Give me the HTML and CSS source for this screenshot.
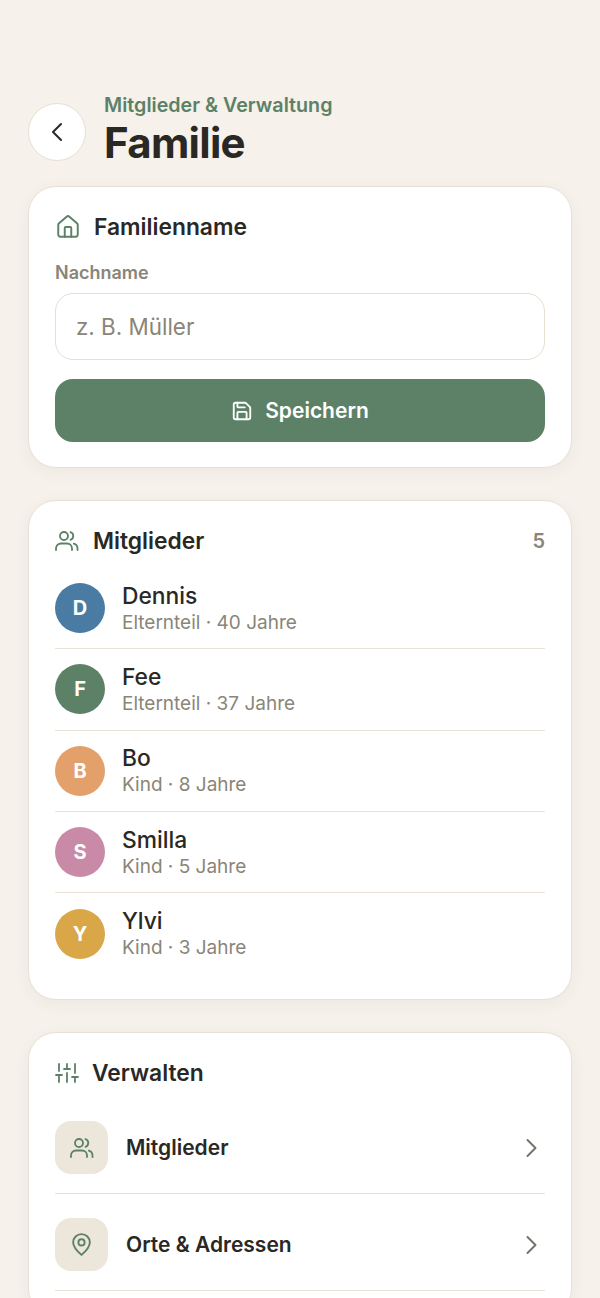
FILE: index.html
```html
<!DOCTYPE html>
<html lang="de">
<head>
    <meta charset="UTF-8">
    <meta name="viewport" content="width=device-width, initial-scale=1.0">
    <title>Familie</title>
    <link rel="stylesheet" href="styles.css">
</head>
<body>
    <!-- Header -->
    <header class="page-header">
        <button class="back-btn" aria-label="Zurück">
            <svg width="24" height="24" viewBox="0 0 24 24" class="icon"><path d="M16 4l-8 8 8 8"/></svg>
        </button>
        <div class="header-text">
            <div class="header-sub">Mitglieder &amp; Verwaltung</div>
            <h1>Familie</h1>
        </div>
    </header>

    <!-- Familienname -->
    <section class="card card-name">
        <div class="card-title title-name">
            <svg width="26" height="26" viewBox="0 0 24 24" class="icon icon-green"><path d="M15 21v-8a1 1 0 0 0-1-1h-4a1 1 0 0 0-1 1v8"/><path d="M3 10a2 2 0 0 1 .709-1.528l7-5.999a2 2 0 0 1 2.582 0l7 5.999A2 2 0 0 1 21 10v9a2 2 0 0 1-2 2H5a2 2 0 0 1-2-2z"/></svg>
            <h2>Familienname</h2>
        </div>
        <label class="field-label" for="lastname">Nachname</label>
        <input class="field-input" id="lastname" type="text" placeholder="z. B. Müller">
        <button class="save-btn">
            <svg width="22" height="22" viewBox="0 0 24 24" class="icon"><path d="M15.2 3a2 2 0 0 1 1.400.6l3.800 3.800a2 2 0 0 1 .6 1.400V19a2 2 0 0 1-2 2H5a2 2 0 0 1-2-2V5a2 2 0 0 1 2-2z"/><path d="M17 21v-7a1 1 0 0 0-1-1H8a1 1 0 0 0-1 1v7"/><path d="M7 3v4a1 1 0 0 0 1 1h7"/></svg>
            Speichern
        </button>
    </section>

    <!-- Mitglieder -->
    <section class="card card-members">
        <div class="card-title title-members">
            <svg width="24" height="24" viewBox="0 0 24 24" class="icon icon-green"><circle cx="9" cy="7" r="4"/><path d="M1 21v-1.500a5 5 0 0 1 5-5h6a5 5 0 0 1 5 5V21"/><path d="M15.500 3.200a4 4 0 0 1 0 7.600"/><path d="M22.500 21v-1.500a5 5 0 0 0-3.700-4.800"/></svg>
            <h2>Mitglieder</h2>
            <span class="count">5</span>
        </div>
        <ul class="member-list">
            <li class="member">
                <div class="avatar avatar-blue">D</div>
                <div><div class="member-name">Dennis</div><div class="member-info">Elternteil · 40 Jahre</div></div>
            </li>
            <li class="member">
                <div class="avatar avatar-green">F</div>
                <div><div class="member-name">Fee</div><div class="member-info">Elternteil · 37 Jahre</div></div>
            </li>
            <li class="member">
                <div class="avatar avatar-orange">B</div>
                <div><div class="member-name">Bo</div><div class="member-info">Kind · 8 Jahre</div></div>
            </li>
            <li class="member">
                <div class="avatar avatar-pink">S</div>
                <div><div class="member-name">Smilla</div><div class="member-info">Kind · 5 Jahre</div></div>
            </li>
            <li class="member">
                <div class="avatar avatar-yellow">Y</div>
                <div><div class="member-name">Ylvi</div><div class="member-info">Kind · 3 Jahre</div></div>
            </li>
        </ul>
    </section>

    <!-- Verwalten -->
    <section class="card card-manage">
        <div class="card-title title-manage">
            <svg width="24" height="24" viewBox="0 0 24 24" class="icon icon-green"><path d="M4 21v-7M4 10V3M12 21v-9M12 8V3M20 21v-5M20 12V3M1 14h6M9 8h6M17 16h6"/></svg>
            <h2>Verwalten</h2>
        </div>
        <a class="manage-row">
            <span class="manage-icon">
                <svg width="24" height="24" viewBox="0 0 24 24" class="icon icon-green"><circle cx="9" cy="7" r="4"/><path d="M1 21v-1.500a5 5 0 0 1 5-5h6a5 5 0 0 1 5 5V21"/><path d="M15.500 3.200a4 4 0 0 1 0 7.600"/><path d="M22.500 21v-1.500a5 5 0 0 0-3.700-4.800"/></svg>
            </span>
            <span class="manage-label">Mitglieder</span>
            <svg width="24" height="24" viewBox="0 0 24 24" class="icon icon-grey"><path d="M8.500 4l8 8-8 8"/></svg>
        </a>
        <a class="manage-row">
            <span class="manage-icon">
                <svg width="25" height="25" viewBox="0 0 24 24" class="icon icon-green"><path d="M20 10c0 5-8 12-8 12s-8-7-8-12a8 8 0 0 1 16 0z"/><circle cx="12" cy="10" r="3"/></svg>
            </span>
            <span class="manage-label">Orte &amp; Adressen</span>
            <svg width="24" height="24" viewBox="0 0 24 24" class="icon icon-grey"><path d="M8.500 4l8 8-8 8"/></svg>
        </a>
    </section>
</body>
</html>
```
FILE: styles.css
```css
* {
    margin: 0;
    padding: 0;
    box-sizing: border-box;
}

html, body {
    height: 100%;
    overflow: hidden;
}

body {
    font-family: Inter, "Liberation Sans", sans-serif;
    background: #f6f1eb;
    color: #2a2825;
    padding: 94px 28px 0;
}

.icon {
    fill: none;
    stroke: currentColor;
    stroke-width: 2;
    stroke-linecap: round;
    stroke-linejoin: round;
    flex-shrink: 0;
}

.icon-green {
    color: #5c8166;
    stroke-width: 1.8;
}

.icon-grey {
    color: #77736c;
}

.page-header {
    display: flex;
    align-items: center;
    gap: 18px;
    margin-bottom: 17px;
}

.back-btn {
    width: 58px;
    height: 58px;
    border-radius: 50%;
    background: #fff;
    border: 1px solid #e7dfd3;
    color: #2a2825;
    display: flex;
    align-items: center;
    justify-content: center;
}

.header-sub {
    font-size: 19.700px;
    line-height: 22px;
    font-weight: 600;
    color: #5c8166;
}

h1 {
    font-size: 42px;
    line-height: 53px;
    font-weight: 700;
    letter-spacing: -0.7px;
}

.card {
    background: #fff;
    border: 1px solid #e8e0d5;
    border-radius: 28px;
    padding: 25px 26px;
    margin-bottom: 32px;
    box-shadow: 0 4px 16px rgba(60, 50, 30, 0.05);
}

.card-title {
    display: flex;
    align-items: center;
}

h2 {
    font-size: 22.800px;
    line-height: 30px;
    font-weight: 600;
}

.title-name {
    gap: 13px;
    margin-bottom: 19px;
}

.title-members {
    gap: 14px;
    margin-bottom: 12px;
}

.title-manage {
    gap: 13px;
    margin-bottom: 9px;
}

.field-label {
    display: block;
    font-size: 18px;
    line-height: 24px;
    font-weight: 600;
    color: #8a8578;
    margin-bottom: 8px;
}

.field-input {
    display: block;
    width: 100%;
    height: 67px;
    border: 1px solid #e6dfcf;
    border-radius: 18px;
    padding: 0 20px;
    font-family: inherit;
    font-size: 22.400px;
    color: #2a2825;
    background: #fff;
    margin-bottom: 19px;
}

.field-input::placeholder {
    color: #8a8578;
    opacity: 1;
}

.save-btn {
    width: 100%;
    height: 63px;
    background: #5c8166;
    color: #fff;
    border: none;
    border-radius: 18px;
    font-family: inherit;
    font-size: 21px;
    font-weight: 600;
    display: flex;
    align-items: center;
    justify-content: center;
    gap: 12px;
}

.count {
    margin-left: auto;
    font-size: 20px;
    font-weight: 600;
    color: #8a8578;
}

.member-list {
    list-style: none;
}

.member {
    display: flex;
    align-items: center;
    gap: 17px;
    height: 81.300px;
    border-bottom: 1px solid #e9e2d6;
}

.member:last-child {
    border-bottom: none;
}

.avatar {
    width: 50px;
    height: 50px;
    border-radius: 50%;
    color: #fff;
    font-size: 20px;
    font-weight: 700;
    display: flex;
    align-items: center;
    justify-content: center;
}

.avatar-blue { background: #4a7ba3; }
.avatar-green { background: #5c8166; }
.avatar-orange { background: #e3a06b; }
.avatar-pink { background: #c98aa8; }
.avatar-yellow { background: #d9a648; }

.member-name {
    font-size: 22.800px;
    line-height: 28px;
    font-weight: 500;
}

.member-info {
    font-size: 19px;
    line-height: 25px;
    color: #8a8578;
}

.manage-row {
    display: flex;
    align-items: center;
    gap: 18px;
    height: 97px;
    padding: 24px 2px 19px 0;
    border-bottom: 1px solid #e9e2d6;
}

.manage-icon {
    width: 53px;
    height: 53px;
    border-radius: 16px;
    background: #ece6db;
    display: flex;
    align-items: center;
    justify-content: center;
}

.manage-label {
    flex: 1;
    font-size: 21px;
    font-weight: 600;
}
```
